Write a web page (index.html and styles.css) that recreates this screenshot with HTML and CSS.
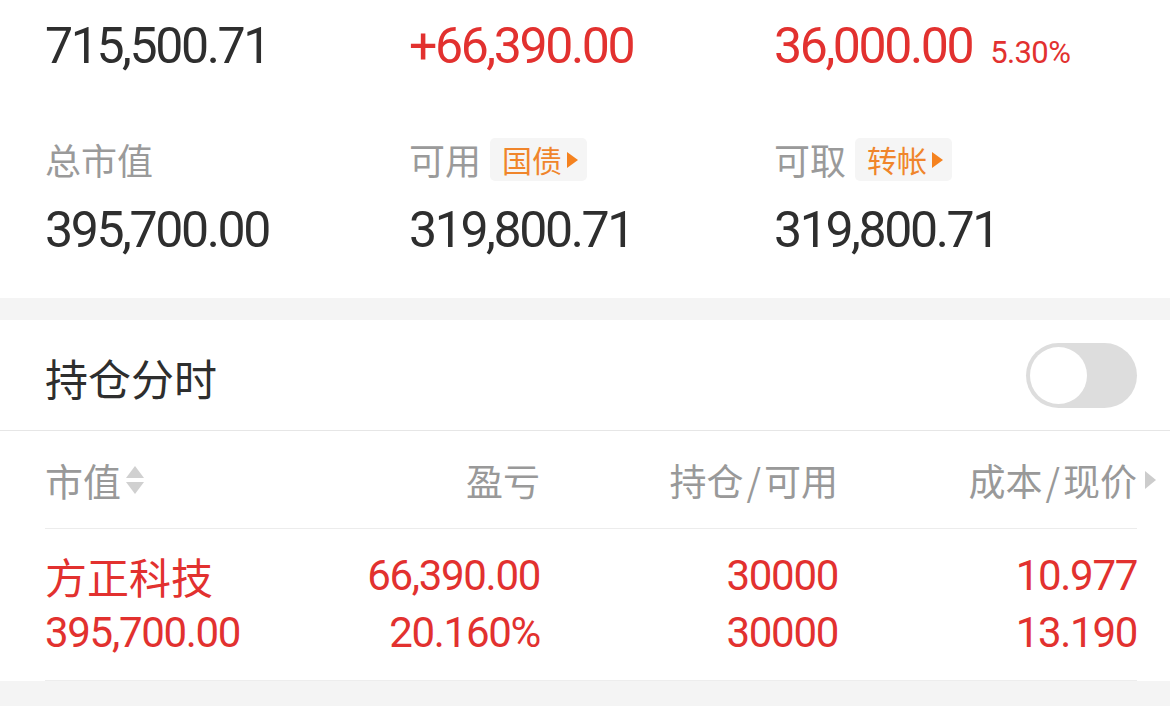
FILE: index.html
```html
<!DOCTYPE html>
<html lang="zh-CN">
<head>
<meta charset="utf-8">
<title>持仓</title>
<link rel="stylesheet" href="styles.css">
</head>
<body>
<div class="summary">
  <div class="stat-grid">
    <div class="num dark">715,500.71</div>
    <div class="num red">+66,390.00</div>
    <div class="num red">36,000.00<span class="pct">5.30%</span></div>

    <div class="label">总市值</div>
    <div class="label">可用<span class="tag">国债<svg class="tri" width="11" height="16" viewBox="0 0 11 16"><path d="M0 0 L11 8 L0 16 Z"/></svg></span></div>
    <div class="label">可取<span class="tag">转帐<svg class="tri" width="11" height="16" viewBox="0 0 11 16"><path d="M0 0 L11 8 L0 16 Z"/></svg></span></div>

    <div class="num dark second">395,700.00</div>
    <div class="num dark second">319,800.71</div>
    <div class="num dark second">319,800.71</div>
  </div>
</div>
<div class="band"></div>
<section class="positions">
  <div class="title-row">
    <span class="title">持仓分时</span>
    <div class="toggle"><span class="knob"></span></div>
  </div>
  <div class="table">
    <div class="thead">
      <div class="th left">市值<svg class="sort" width="18" height="30" viewBox="0 0 18 30"><path d="M0 13 L9 1 L18 13 Z"/><path d="M0 17 L18 17 L9 29 Z"/></svg></div>
      <div class="th">盈亏</div>
      <div class="th">持仓<span class="slash">/</span>可用</div>
      <div class="th last">成本<span class="slash">/</span>现价<svg class="more" width="11" height="18" viewBox="0 0 11 18"><path d="M0 0 L11 9 L0 18 Z"/></svg></div>
    </div>
    <div class="trow">
      <div class="td left">
        <div class="name">方正科技</div>
        <div class="num-sm">395,700.00</div>
      </div>
      <div class="td">
        <div class="num-sm">66,390.00</div>
        <div class="num-sm">20.160%</div>
      </div>
      <div class="td">
        <div class="num-sm">30000</div>
        <div class="num-sm">30000</div>
      </div>
      <div class="td">
        <div class="num-sm">10.977</div>
        <div class="num-sm">13.190</div>
      </div>
    </div>
  </div>
</section>
<div class="band bottom"></div>
</body>
</html>
```
FILE: styles.css
```css
* { box-sizing: border-box; }
html, body {
  margin: 0;
  padding: 0;
  background: #ffffff;
  font-family: "Noto Sans CJK SC", "Noto Sans", sans-serif;
  overflow: hidden;
}
body { width: 1170px; height: 706px; }

.summary {
  padding: 16px 0 38px 45px;
}
.stat-grid {
  display: grid;
  grid-template-columns: 364px 365px 1fr;
}
.num {
  font-family: Roboto, "Liberation Sans", sans-serif;
  font-size: 50px;
  line-height: 60px;
  height: 60px;
  letter-spacing: -2.4px;
  white-space: nowrap;
}
.num.second { margin-top: 19px; }
.dark { color: #2e2e2e; }
.red { color: #e2312f; }
.pct {
  font-size: 31px;
  letter-spacing: -0.6px;
  margin-left: 18px;
}
.label {
  margin-top: 62px;
  height: 43px;
  display: flex;
  align-items: center;
  font-size: 36px;
  color: #9a9a9a;
  line-height: 43px;
}
.tag {
  display: inline-flex;
  align-items: center;
  height: 43px;
  margin-left: 9px;
  padding: 0 9px 0 12px;
  background: #f5f5f5;
  border-radius: 5px;
  font-size: 30px;
  color: #f0852b;
}
.tag .tri {
  fill: #f5821f;
  margin-left: 5px;
}

.band {
  height: 22px;
  background: #f4f4f4;
}
.band.bottom { height: 26px; }

.title-row {
  height: 111px;
  display: flex;
  align-items: center;
  justify-content: space-between;
  padding: 0 33px 0 45px;
  border-bottom: 1px solid #e6e6e6;
}
.title {
  font-size: 43px;
  color: #2e2e2e;
  margin-top: 4px;
}
.toggle {
  width: 111px;
  height: 65px;
  border-radius: 33px;
  background: #dddddd;
  padding: 4px 0 0 4px;
}
.knob {
  display: block;
  width: 57px;
  height: 57px;
  border-radius: 50%;
  background: #ffffff;
}

.table {
  padding: 0 33px 0 45px;
}
.thead, .trow {
  display: grid;
  grid-template-columns: 200px 295px 298px 1fr;
}
.thead {
  height: 98px;
  align-items: center;
  border-bottom: 1px solid #ececec;
}
.th {
  font-size: 37px;
  color: #999999;
  text-align: right;
  line-height: 50px;
  white-space: nowrap;
}
.slash {
  margin: 0 3px;
}
.th.left {
  font-size: 38px;
  text-align: left;
  display: flex;
  align-items: center;
}
.sort {
  fill: #d0d0d0;
  margin-left: 5px;
}
.th.last { position: relative; }
.more {
  position: absolute;
  right: -19px;
  top: 16px;
  fill: #cccccc;
}
.trow {
  padding: 18px 0 19px;
  border-bottom: 1px solid #ededed;
  color: #e2312f;
}
.td { text-align: right; }
.td.left { text-align: left; }
.name {
  font-size: 42px;
  line-height: 57px;
  height: 57px;
}
.num-sm {
  font-family: Roboto, "Liberation Sans", sans-serif;
  font-size: 42px;
  line-height: 57px;
  height: 57px;
  letter-spacing: -1.3px;
  white-space: nowrap;
}
```
